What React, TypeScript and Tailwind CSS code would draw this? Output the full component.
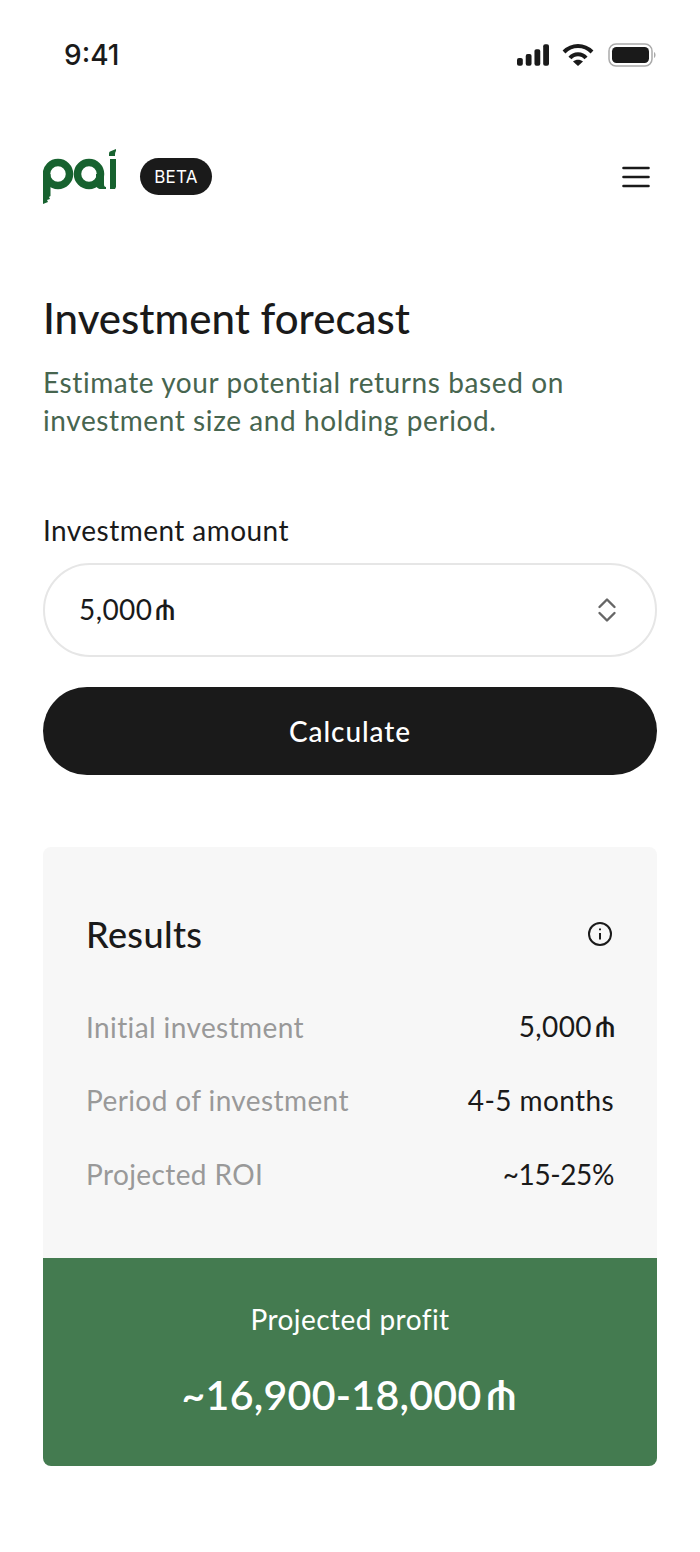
function Row({ label, value }: { label: string; value: React.ReactNode }) {
  return (
    <div className="flex items-center justify-between h-[37px] text-[28px] tracking-[0.4px]">
      <span className="text-[#999999]">{label}</span>
      <span className="text-[#1a1a1a]">{value}</span>
    </div>
  );
}

function Dram() {
  return <span className="inline-block w-[24px] ml-[1px] -mr-[3px] text-center scale-x-[1.3] font-['DejaVu_Sans',sans-serif] tracking-normal">⋔</span>;
}

export default function App() {
  return (
    <div className="w-[700px] h-[1552px] bg-white flex flex-col font-['Lato',sans-serif]">
      <div className="flex items-center justify-between h-[44px] mt-[33px] pl-[64px] pr-[44px]">
        <span className="text-[28px] font-medium text-[#1a1a1a] font-['Inter',sans-serif]">9:41</span>
        <div className="flex items-center gap-[14px]">
          <svg className="mr-[-1px]" width="32" height="22" viewBox="0 0 33 22" fill="#1a1a1a">
            <rect x="0" y="14" width="6" height="8" rx="2" />
            <rect x="9" y="10" width="6" height="12" rx="2" />
            <rect x="18" y="5" width="6" height="17" rx="2" />
            <rect x="27" y="0" width="6" height="22" rx="2" />
          </svg>
          <svg width="32" height="22" viewBox="0 0 32 22" fill="none" stroke="#1a1a1a" strokeWidth="4">
            <path d="M2 8 C 10 0, 22 0, 30 8" />
            <path d="M8 14 C 12 9, 20 9, 24 14" />
            <path d="M16 22 L11 17.5 C 14 15, 18 15, 21 17.5 Z" fill="#1a1a1a" stroke="none" />
          </svg>
          <svg width="48" height="24" viewBox="0 0 48 24" fill="none">
            <rect x="1" y="1" width="43" height="22" rx="7" stroke="#aaaaaa" strokeWidth="1.5" />
            <rect x="4" y="4" width="37" height="16" rx="4.5" fill="#1a1a1a" />
            <path d="M46 9 C 48 10, 48 14, 46 15 Z" fill="#aaaaaa" />
          </svg>
        </div>
      </div>
      <div className="flex items-center justify-between mt-[68px] pl-[43px] pr-[50px] h-[64px]">
        <div className="flex items-center gap-[24px]">
          <svg width="73" height="56" viewBox="0 0 73 56" fill="#17622f">
            <circle cx="15" cy="25" r="11.5" fill="none" stroke="#17622f" strokeWidth="7.5" />
            <path d="M0 25 H7.5 V47 L6 48 L7 50 L4 51 L5 53 L0 55 Z" />
            <circle cx="46" cy="25" r="11.5" fill="none" stroke="#17622f" strokeWidth="7.5" />
            <path d="M53 25 H61 V35 C61 37 61.5 38 63 38 V40 H58 C55 40 53 38 53 35 Z" />
            <path d="M67 10 H73 V38 L72 40 H67 Z" />
            <path d="M66 7 C 66 4 66 3 67 2.5 L73 0 V2 C 72 3 72 5 72 7 Z" />
          </svg>
          <span className="flex items-center justify-center w-[72px] h-[37px] mb-[2px] pt-[3px] rounded-full bg-[#1a1a1a] text-white text-[17px] tracking-[0.2px] font-['Inter',sans-serif]">BETA</span>
        </div>
        <svg width="28" height="22" viewBox="0 0 28 22" stroke="#1a1a1a" strokeWidth="2.6" strokeLinecap="round">
          <path d="M1.5 2 H26.5 M1.5 11 H26.5 M1.5 20 H26.5" />
        </svg>
      </div>
      <div className="px-[43px]">
        <h1 className="mt-[84px] text-[42px] leading-[50px] font-medium text-[#1a1a1a]">Investment forecast</h1>
        <p className="mt-[20px] text-[28px] leading-[38px] text-[#47654f] tracking-[0.6px]">Estimate your potential returns based on investment size and holding period.</p>
        <div className="mt-[72px] text-[28px] leading-[38px] text-[#1a1a1a] tracking-[0.45px]">Investment amount</div>
        <div className="mt-[14px] h-[94px] rounded-full border-2 border-[#e6e6e6] flex items-center justify-between pl-[34px] pr-[38px]">
          <span className="text-[28px] text-[#1a1a1a] tracking-[0.4px]">5,000<Dram /></span>
          <svg width="20" height="26" viewBox="0 0 20 26" fill="none" stroke="#666666" strokeWidth="2.4" strokeLinecap="round" strokeLinejoin="round">
            <path d="M2.5 10 L10 2.5 L17.5 10 M2.5 16 L10 23.5 L17.5 16" />
          </svg>
        </div>
        <button className="mt-[30px] w-full h-[88px] rounded-full bg-[#1a1a1a] text-white text-[28px] font-medium tracking-[0.9px]">Calculate</button>
        <div className="mt-[72px] rounded-[8px] overflow-hidden">
          <div className="bg-[#f7f7f7] h-[411px] px-[43px] pt-[67px]">
            <div className="flex items-center justify-between h-[40px]">
              <span className="text-[36px] font-medium text-[#1a1a1a] tracking-[0.4px]">Results</span>
              <svg className="mr-[1px]" width="26" height="26" viewBox="0 0 26 26" fill="none" stroke="#1a1a1a" strokeWidth="2">
                <circle cx="13" cy="13" r="11" />
                <path d="M13 12 V18.5 M13 7.5 V9.2" />
              </svg>
            </div>
            <div className="mt-[54px] flex flex-col gap-[36.5px]">
              <Row label="Initial investment" value={<>5,000<Dram /></>} />
              <Row label="Period of investment" value="4-5 months" />
              <Row label="Projected ROI" value={<span className="tracking-[-0.4px]">~15-25%</span>} />
            </div>
          </div>
          <div className="bg-[#447b50] h-[208px] flex flex-col items-center text-white">
            <div className="mt-[42px] text-[28px] leading-[38px] tracking-[0.45px]">Projected profit</div>
            <div className="mt-[31px] text-[41px] leading-[52px] font-semibold tracking-[0.3px]">
              ~16,900-18,000<span className="inline-block w-[34px] ml-[3px] text-center scale-x-[1.35] font-['DejaVu_Sans',sans-serif] font-normal">⋔</span>
            </div>
          </div>
        </div>
      </div>
    </div>
  );
}
